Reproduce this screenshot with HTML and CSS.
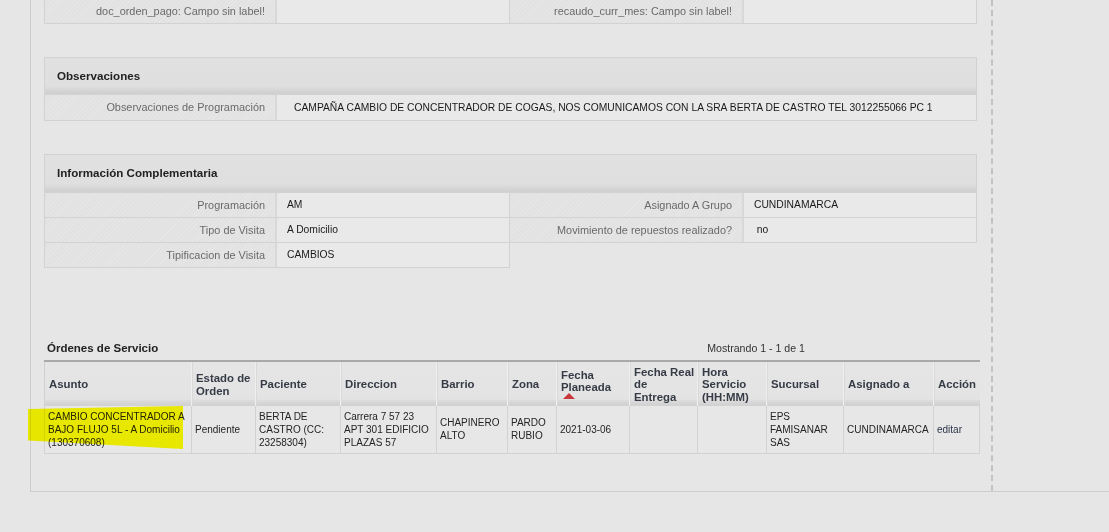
FILE: index.html
```html
<!DOCTYPE html>
<html lang="es">
<head>
<meta charset="utf-8">
<title>Orden</title>
<link rel="stylesheet" href="styles.css">
</head>
<body>
<div class="frame">
  <div class="main">
    <div class="panel panel-top">
      <div class="grid4">
        <div class="lbl">doc_orden_pago: Campo sin label!</div>
        <div class="val"></div>
        <div class="lbl">recaudo_curr_mes: Campo sin label!</div>
        <div class="val"></div>
      </div>
    </div>

    <div class="panel panel-obs">
      <div class="phead">Observaciones</div>
      <div class="grid2">
        <div class="lbl">Observaciones de Programación</div>
        <div class="val val-obs">CAMPAÑA CAMBIO DE CONCENTRADOR DE COGAS, NOS COMUNICAMOS CON LA SRA BERTA DE CASTRO TEL 3012255066 PC 1</div>
      </div>
    </div>

    <div class="panel-info">
      <div class="panel phead-wrap"><div class="phead phead-info">Información Complementaria</div></div>
      <div class="halves">
        <div class="half">
          <div class="lbl">Programación</div><div class="val">AM</div>
          <div class="lbl">Tipo de Visita</div><div class="val">A Domicilio</div>
          <div class="lbl">Tipificacion de Visita</div><div class="val">CAMBIOS</div>
        </div>
        <div class="half half-r">
          <div class="lbl">Asignado A Grupo</div><div class="val">CUNDINAMARCA</div>
          <div class="lbl">Movimiento de repuestos realizado?</div><div class="val">&nbsp;no</div>
        </div>
      </div>
    </div>

    <div class="orders">
      <div class="orders-title">
        <span class="ot">Órdenes de Servicio</span>
        <span class="count">Mostrando 1 - 1 de 1</span>
      </div>
      <div class="tablewrap">
        <table class="otable">
          <colgroup>
            <col style="width:147px"><col style="width:64px"><col style="width:85px"><col style="width:96px"><col style="width:71px"><col style="width:49px"><col style="width:73px"><col style="width:68px"><col style="width:69px"><col style="width:77px"><col style="width:90px"><col style="width:46px">
          </colgroup>
          <thead>
            <tr>
              <th>Asunto</th>
              <th>Estado de Orden</th>
              <th>Paciente</th>
              <th>Direccion</th>
              <th>Barrio</th>
              <th>Zona</th>
              <th class="sorted">Fecha Planeada<span class="arrow"></span></th>
              <th>Fecha Real<br>de<br>Entrega</th>
              <th>Hora<br>Servicio<br>(HH:MM)</th>
              <th>Sucursal</th>
              <th>Asignado a</th>
              <th>Acción</th>
            </tr>
          </thead>
          <tbody>
            <tr>
              <td>CAMBIO CONCENTRADOR A BAJO FLUJO 5L - A Domicilio (130370608)</td>
              <td>Pendiente</td>
              <td>BERTA DE CASTRO (CC: 23258304)</td>
              <td>Carrera 7 57 23 APT 301 EDIFICIO PLAZAS 57</td>
              <td>CHAPINERO ALTO</td>
              <td>PARDO RUBIO</td>
              <td>2021-03-06</td>
              <td></td>
              <td></td>
              <td>EPS FAMISANAR SAS</td>
              <td>CUNDINAMARCA</td>
              <td><a class="lnk" href="#">editar</a></td>
            </tr>
          </tbody>
        </table>
        <div class="marker"></div>
      </div>
    </div>
  </div>
</div>
</body>
</html>
```

FILE: styles.css
```css
html, body {
  margin: 0;
  padding: 0;
  background: #e6e6e6;
  font-family: "Liberation Sans", Arial, sans-serif;
  color: #333;
}

.frame {
  margin-left: 30px;
  border-left: 1px solid #cdcdcd;
  border-bottom: 1px solid #cdcdcd;
  height: 492px;
  box-sizing: border-box;
}

.main {
  width: 962px;
  height: 491px;
  box-sizing: border-box;
  border-right: 2px dashed #c2c2c2;
  padding: 0 16px 0 13px;
}

.panel {
  border: 1px solid #d2d2d2;
  background: #e8e8e8;
  width: 933px;
  box-sizing: border-box;
}

.panel-top {
  border-top: none;
}

.panel-top .lbl,
.panel-top .val {
  height: 23px;
  line-height: 23px;
}

.grid4 {
  display: grid;
  grid-template-columns: 232px 233px 234px 1fr;
}

.grid2 {
  display: grid;
  grid-template-columns: 232px 1fr;
}

.lbl {
  height: 24px;
  line-height: 24px;
  font-size: 10.9px;
  color: #6a6a6a;
  text-align: right;
  padding-right: 10px;
  border-right: 2px solid #d8d8d8;
  background-color: #e2e2e2;
  background-image: repeating-linear-gradient(135deg, rgba(255,255,255,0.14) 0 1px, rgba(0,0,0,0) 1px 3px);
  white-space: nowrap;
  overflow: hidden;
}

.val {
  height: 24px;
  line-height: 24px;
  font-size: 10.3px;
  color: #1a1a1a;
  padding-left: 10px;
  background: #e9e9e9;
  white-space: nowrap;
  overflow: hidden;
}

.val-obs {
  padding-left: 17px;
}

.grid4 .val:nth-child(2) {
  border-right: 1px solid #d2d2d2;
}

.panel-obs {
  margin-top: 33px;
}

.phead {
  height: 36px;
  line-height: 36px;
  padding-left: 12px;
  font-size: 11.6px;
  font-weight: bold;
  color: #222;
  background: linear-gradient(to bottom, #e1e1e1 0, #dfdfdf 28px, #d4d4d4 33px, #cfcfcf 36px);
  border-bottom: 1px solid #d2d2d2;
}

.phead-info {
  height: 37px;
  background: linear-gradient(to bottom, #e1e1e1 0, #dfdfdf 29px, #d4d4d4 34px, #cfcfcf 37px);
}

.panel-obs .grid2 .lbl,
.panel-obs .grid2 .val {
  height: 25px;
  line-height: 25px;
}

.panel-info {
  margin-top: 33px;
  width: 933px;
}

.phead-wrap {
  border-bottom: none;
}

.halves {
  display: flex;
}

.half {
  width: 466px;
  display: grid;
  grid-template-columns: 232px 1fr;
  border: 1px solid #d2d2d2;
  border-top: none;
  box-sizing: border-box;
  align-self: flex-start;
}

.half-r {
  width: 467px;
  border-left: none;
  grid-template-columns: 234px 1fr;
}

.half .lbl,
.half .val {
  border-bottom: 1px solid #d2d2d2;
}

.half .lbl:nth-last-child(2),
.half .val:last-child {
  border-bottom: none;
}

.orders {
  margin-top: 68px;
  width: 935px;
}

.orders-title {
  display: flex;
  justify-content: space-between;
  align-items: center;
  height: 24px;
  padding-left: 3px;
  padding-right: 174px;
}

.ot {
  font-size: 11.5px;
  font-weight: bold;
  color: #222;
}

.count {
  font-size: 10.6px;
  color: #333;
}

.tablewrap {
  position: relative;
}

.otable {
  width: 935px;
  border-collapse: collapse;
  table-layout: fixed;
  border-top: 2px solid #a9a9a9;
}

.otable th {
  position: relative;
  font-size: 11.4px;
  font-weight: bold;
  color: #363b46;
  text-align: left;
  vertical-align: middle;
  height: 44px;
  box-sizing: border-box;
  padding: 3px 1px 0 4px;
  line-height: 12.6px;
  background: linear-gradient(to bottom, #e5e5e5 0, #e3e3e3 37px, #d7d7d7 40px, #d0d0d0 44px);
  border-left: 1px solid #efefef;
  box-shadow: inset 1px 0 0 #d9d9d9;
}

.otable th:first-child {
  border-left: 1px solid #d0d0d0;
  box-shadow: none;
}

.otable th.sorted {
  padding-bottom: 7px;
}

.arrow {
  position: absolute;
  left: 6px;
  bottom: 6px;
  width: 0;
  height: 0;
  border-left: 6px solid transparent;
  border-right: 6px solid transparent;
  border-bottom: 6px solid #c8383c;
}

.otable td {
  font-size: 10px;
  color: #242424;
  line-height: 13px;
  padding: 1px 1px 1px 3px;
  height: 48px;
  box-sizing: border-box;
  vertical-align: middle;
  border: 1px solid #d2d2d2;
  background: #e7e7e7;
}

.lnk {
  color: #2c3548;
  text-decoration: none;
}

.marker {
  position: absolute;
  left: -16px;
  top: 46px;
  width: 155px;
  height: 43px;
  background: #ffff00;
  mix-blend-mode: multiply;
  clip-path: polygon(0 3px, 100% 0, 100% 100%, 0 80%);
}
```
